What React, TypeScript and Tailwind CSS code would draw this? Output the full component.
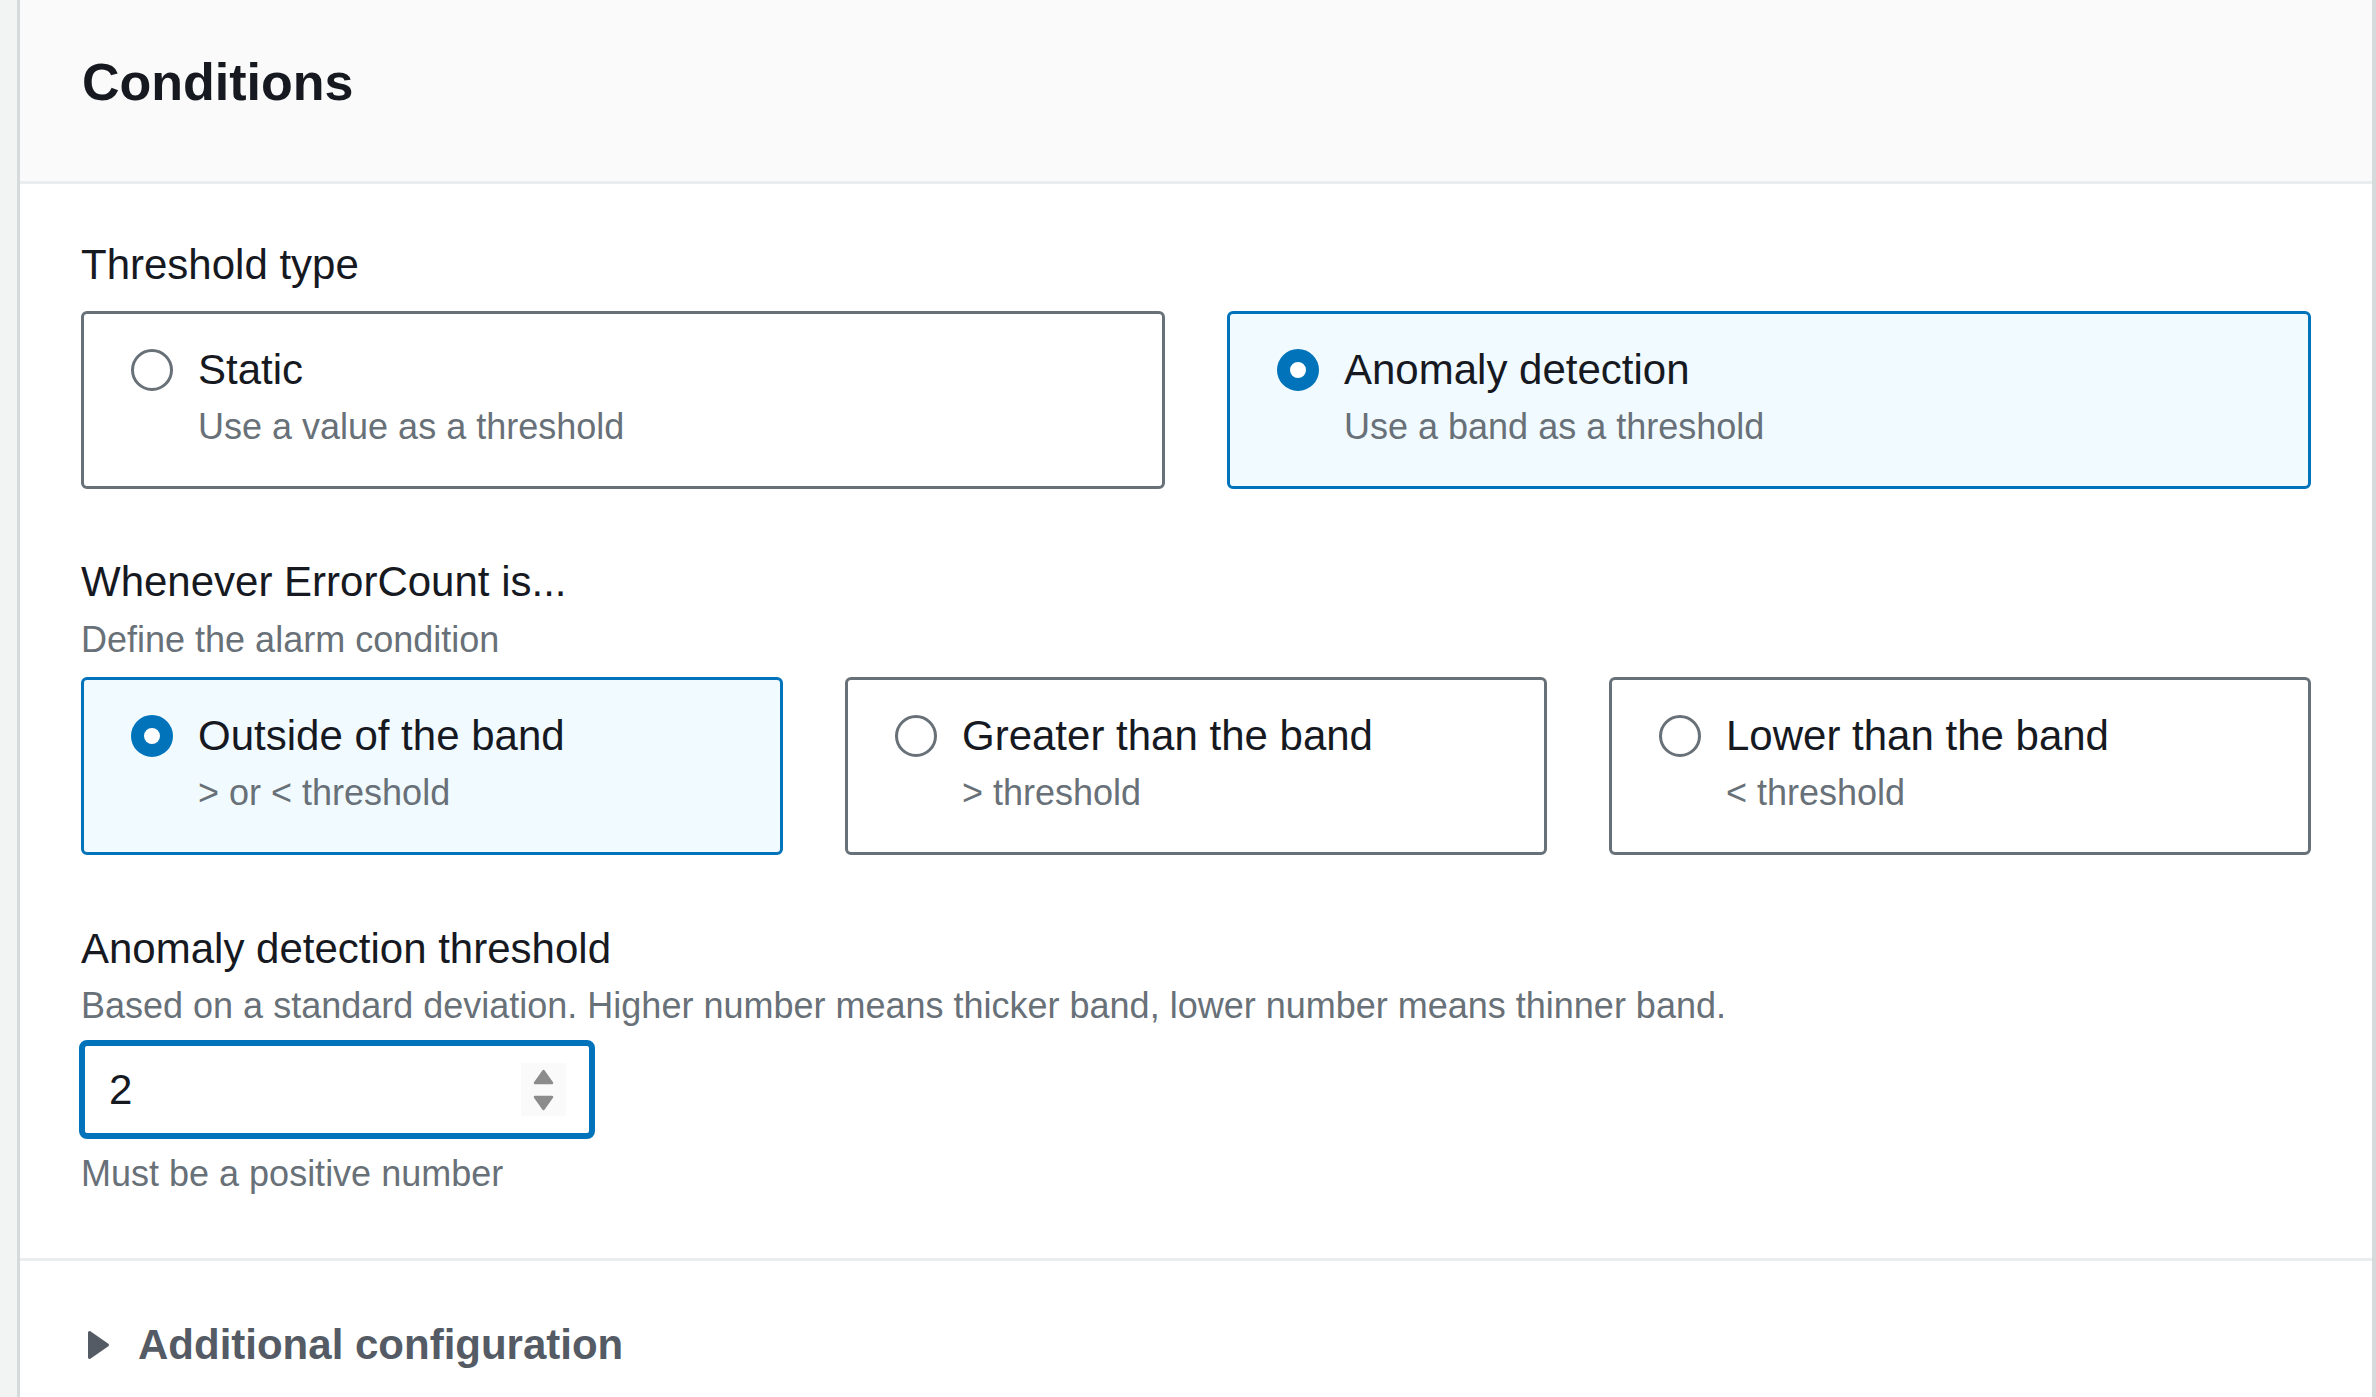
import React from 'react';

interface RadioCardProps {
  title: string;
  description: string;
  checked: boolean;
}

const Radio: React.FC<{ checked: boolean }> = ({ checked }) => (
  <span
    className={`block shrink-0 size-[42px] rounded-full bg-white ${
      checked ? 'border-[13px] border-[#0073bb]' : 'border-[3px] border-[#687078]'
    }`}
  />
);

const RadioCard: React.FC<RadioCardProps> = ({ title, description, checked }) => (
  <div
    className={`h-[178px] rounded-[6px] border-[3px] pt-[26px] pl-[47px] pr-6 ${
      checked ? 'border-[#0073bb] bg-[#f1faff]' : 'border-[#687078] bg-white'
    }`}
  >
    <div className="flex items-center gap-[25px]">
      <Radio checked={checked} />
      <span className="text-[42px] leading-[60px] text-[#16191f]">{title}</span>
    </div>
    <div className="mt-[3px] pl-[67px] text-[36px] leading-[48px] text-[#687078]">{description}</div>
  </div>
);

const Label: React.FC<{ children: React.ReactNode; className?: string }> = ({ children, className = '' }) => (
  <div className={`text-[42px] leading-[60px] text-[#16191f] ${className}`}>{children}</div>
);

const Description: React.FC<{ children: React.ReactNode; className?: string }> = ({ children, className = '' }) => (
  <div className={`text-[36px] leading-[48px] text-[#687078] ${className}`}>{children}</div>
);

const App: React.FC = () => {
  return (
    <div className="flex h-[1397px] w-full overflow-hidden bg-[#f2f3f3] font-['Liberation_Sans',Arial,sans-serif]">
      <div className="w-[17px] shrink-0" />
      <div className="flex flex-1 flex-col border-l-[3px] border-r-[4px] border-[#d5dbdb] bg-white">
        {/* header */}
        <div className="h-[184px] shrink-0 border-b-[3px] border-[#eaeded] bg-[#fafafa] px-[62px] pt-[50px]">
          <h2 className="text-[52px] font-bold leading-[64px] text-[#16191f]">Conditions</h2>
        </div>

        {/* body */}
        <div className="px-[61px] pt-[51px] pb-[60px]">
          <Label>Threshold type</Label>
          <div className="mt-[16px] grid grid-cols-2 gap-[62px]">
            <RadioCard title="Static" description="Use a value as a threshold" checked={false} />
            <RadioCard title="Anomaly detection" description="Use a band as a threshold" checked />
          </div>

          <Label className="mt-[63px]">Whenever ErrorCount is...</Label>
          <Description className="mt-[4px]">Define the alarm condition</Description>
          <div className="mt-[13px] grid grid-cols-3 gap-[62px]">
            <RadioCard title="Outside of the band" description="> or < threshold" checked />
            <RadioCard title="Greater than the band" description="> threshold" checked={false} />
            <RadioCard title="Lower than the band" description="< threshold" checked={false} />
          </div>

          <Label className="mt-[64px]">Anomaly detection threshold</Label>
          <Description className="mt-[3px]">
            Based on a standard deviation. Higher number means thicker band, lower number means thinner band.
          </Description>
          <div className="-ml-[2px] mt-[10px] flex h-[99px] w-[516px] items-center rounded-[8px] border-[6px] border-[#0073bb] bg-white pl-[24px] pr-[23px]">
            <span className="flex-1 text-[42px] leading-[60px] text-[#16191f]">2</span>
            <div className="h-[53px] w-[45px] bg-[#fafafa]">
              <svg width="45" height="53" viewBox="0 0 45 53">
                <polygon points="14,20 22.5,8 31,20" fill="#8c8c8c" stroke="#8c8c8c" strokeWidth="2.5" strokeLinejoin="round" />
                <polygon points="14,34 22.5,46 31,34" fill="#8c8c8c" stroke="#8c8c8c" strokeWidth="2.5" strokeLinejoin="round" />
              </svg>
            </div>
          </div>
          <Description className="mt-[11px]">Must be a positive number</Description>
        </div>

        {/* expandable section */}
        <div className="border-t-[3px] border-[#eaeded] px-[61px] pt-[54px]">
          <div className="flex items-center gap-[28px] pl-[6px]">
            <svg width="23" height="30" viewBox="0 0 23 30" className="shrink-0">
              <path
                d="M2.5 2.5 L20.5 15 L2.5 27.5 Z"
                fill="#545b64"
                stroke="#545b64"
                strokeWidth="3"
                strokeLinejoin="round"
              />
            </svg>
            <span className="text-[42px] font-bold leading-[60px] text-[#545b64]">Additional configuration</span>
          </div>
        </div>
      </div>
    </div>
  );
};

export default App;
